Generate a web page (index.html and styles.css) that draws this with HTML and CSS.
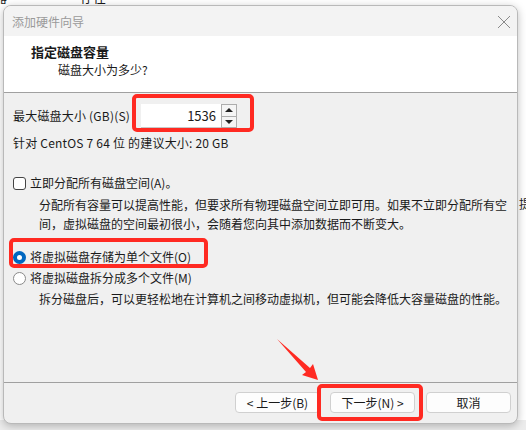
FILE: index.html
```html
<!DOCTYPE html>
<html lang="zh-CN">
<head>
  <meta charset="UTF-8">
  <meta name="viewport" content="width=device-width, initial-scale=1.0">
  <title>添加硬件向导</title>
  <link rel="stylesheet" href="styles.css">
</head>
<body>
  <div class="desktop">
    <div class="back_top">
      <span class="back_text back_text1">器</span>
      <span class="back_text back_text2">存在</span>
    </div>
    <div class="back_bottom"></div>
    <span class="back_right">提</span>

    <div class="dialog">
      <div class="titlebar">
        <span class="title">添加硬件向导</span>
        <svg class="close" width="14" height="14" viewBox="0 0 14 14">
          <path d="M1 1 L13 13 M13 1 L1 13" stroke="#8a8a8a" stroke-width="1" fill="none"/>
        </svg>
      </div>

      <div class="header">
        <div class="header_title">指定磁盘容量</div>
        <div class="header_sub">磁盘大小为多少?</div>
      </div>

      <div class="content">
        <div class="size_row">
          <span class="wide">最大磁盘大小 (GB)(S)</span>
          <div class="spinbox">
            <span class="spin_value">1536</span>
            <div class="spin_btns">
              <span class="spin_btn"><i class="tri_up"></i></span>
              <span class="spin_btn"><i class="tri_down"></i></span>
            </div>
          </div>
        </div>
        <div class="hint wide">针对 CentOS 7 64 位 的建议大小: 20 GB</div>

        <label class="option check_opt">
          <span class="checkbox"></span>
          <span>立即分配所有磁盘空间(A)。</span>
        </label>
        <div class="desc">分配所有容量可以提高性能，但要求所有物理磁盘空间立即可用。如果不立即分配所有空<br>间，虚拟磁盘的空间最初很小，会随着您向其中添加数据而不断变大。</div>

        <label class="option radio_one">
          <span class="radio checked"></span>
          <span>将虚拟磁盘存储为单个文件(O)</span>
        </label>
        <label class="option radio_two">
          <span class="radio"></span>
          <span>将虚拟磁盘拆分成多个文件(M)</span>
        </label>
        <div class="desc desc_two">拆分磁盘后，可以更轻松地在计算机之间移动虚拟机，但可能会降低大容量磁盘的性能。</div>
      </div>

      <div class="footer">
        <button class="btn">&lt; 上一步(B)</button>
        <button class="btn">下一步(N) &gt;</button>
        <button class="btn btn_cancel">取消</button>
      </div>
    </div>

    <!-- 标注 -->
    <div class="mark mark_size"></div>
    <div class="mark mark_radio"></div>
    <div class="mark mark_next"></div>
    <svg class="arrow" width="526" height="430" viewBox="0 0 526 430">
      <polygon points="277,339 310,368 313,364 318,380 302,375 306,372" fill="#ff2a22"/>
    </svg>
  </div>
</body>
</html>
```

FILE: styles.css
```css
* {
  box-sizing: border-box;
}
body {
  margin: 0;
  background: #fff;
  font-family: "Noto Sans CJK SC", sans-serif;
  font-size: 12px;
  color: #1a1a1a;
}
.desktop {
  position: relative;
  width: 526px;
  height: 430px;
  overflow: hidden;
  padding: 5px 0 0 3px;
}
.back_top {
  position: absolute;
  left: 0;
  top: 0;
  width: 526px;
  height: 5px;
  background: #fff;
}
.back_text {
  position: absolute;
  top: -10px;
  font-size: 13px;
  line-height: 14px;
}
.back_text1 { left: -6px; }
.back_text2 { left: 80px; }
.back_bottom {
  position: absolute;
  left: 0;
  top: 420px;
  width: 526px;
  height: 10px;
  background: #ececec;
  border-left: 268px solid #ececec;
}
.back_right {
  position: absolute;
  left: 519px;
  top: 194px;
  font-size: 12px;
  line-height: 19px;
}

.dialog {
  position: relative;
  width: 515px;
  height: 419px;
  display: flex;
  flex-direction: column;
  border: 1px solid #b9b9b9;
  border-radius: 8px;
  overflow: hidden;
  background: #f0f0f0;
  box-shadow: 0 2px 8px rgba(0,0,0,0.25);
}
.titlebar {
  height: 30px;
  flex-shrink: 0;
  display: flex;
  align-items: center;
  justify-content: space-between;
  padding: 0 6px 0 8px;
  background: #f3f3f3;
}
.title {
  color: #9a9a9a;
  font-size: 12px;
}
.close {
  margin-top: 1px;
}
.header {
  height: 57px;
  flex-shrink: 0;
  background: #fff;
  border-bottom: 1px solid #a0a0a0;
  padding: 7px 0 0 27px;
}
.header_title {
  font-weight: bold;
  font-size: 13px;
  line-height: 18px;
}
.header_sub {
  padding-left: 27px;
  line-height: 18px;
}

.content {
  flex: 1;
  padding: 11px 0 0 9px;
  line-height: 16px;
}
.wide {
  letter-spacing: 0.2px;
}
.size_row {
  display: flex;
  align-items: center;
  height: 24px;
  gap: 11px;
}
.spinbox {
  display: flex;
  height: 24px;
}
.spin_value {
  width: 80px;
  background: #fff;
  border-bottom: 1px solid #c8c8c8;
  text-align: right;
  padding-right: 5px;
  line-height: 24px;
  font-size: 13px;
}
.spin_btns {
  width: 16px;
  display: flex;
  flex-direction: column;
  border: 1px solid #adadad;
  background: #f5f5f5;
}
.spin_btn {
  flex: 1;
  display: flex;
  align-items: center;
  justify-content: center;
}
.spin_btn + .spin_btn {
  border-top: 1px solid #adadad;
}
.tri_up, .tri_down {
  width: 0;
  height: 0;
  border-left: 4px solid transparent;
  border-right: 4px solid transparent;
}
.tri_up { border-bottom: 4px solid #222; }
.tri_down { border-top: 4px solid #222; }

.hint {
  margin-top: 7px;
}
.option {
  display: flex;
  align-items: center;
  gap: 4px;
  height: 16px;
}
.check_opt { margin-top: 24px; }
.radio_one { margin-top: 16px; }
.radio_two { margin-top: 5px; }
.checkbox {
  width: 13px;
  height: 13px;
  border: 1px solid #444;
  border-radius: 3px;
  background: #fff;
}
.radio {
  width: 13px;
  height: 13px;
  border: 1px solid #8a8a8a;
  border-radius: 50%;
  background: #fff;
}
.radio.checked {
  border: 4px solid #0067c0;
}
.desc {
  margin-top: 4px;
  padding-left: 26px;
  line-height: 19px;
}
.desc_two {
  margin-top: 3px;
}

.footer {
  height: 41px;
  flex-shrink: 0;
  border-top: 1px solid #a0a0a0;
  display: flex;
  justify-content: flex-end;
  align-items: flex-start;
  padding: 9px 6px 0 0;
  gap: 10px;
}
.btn {
  width: 85px;
  height: 21px;
  padding: 0;
  background: #fdfdfd;
  border: 1px solid #d0d0d0;
  border-radius: 4px;
  font-family: "Noto Sans CJK SC", sans-serif;
  font-size: 12px;
  line-height: 18px;
  color: #1a1a1a;
}
.btn_cancel {
  margin-left: 1px;
}

.mark {
  position: absolute;
  border: 4px solid #ff2a22;
  border-radius: 5px;
}
.mark_size {
  left: 132px;
  top: 94px;
  width: 122px;
  height: 38px;
}
.mark_radio {
  left: 9px;
  top: 238px;
  width: 199px;
  height: 30px;
}
.mark_next {
  left: 317px;
  top: 384px;
  width: 106px;
  height: 37px;
}
.arrow {
  position: absolute;
  left: 0;
  top: 0;
}
```
